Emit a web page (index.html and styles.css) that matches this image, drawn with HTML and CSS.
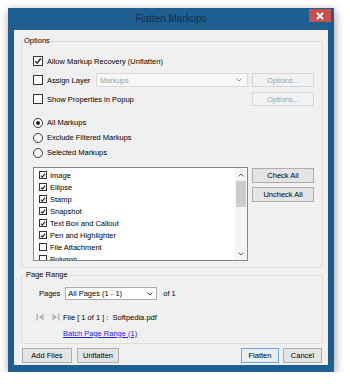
FILE: index.html
```html
<!DOCTYPE html>
<html>
<head>
<link rel="stylesheet" href="styles.css">
</head>
<body>
    <div class="window">
        <div class="titlebar">
            <div class="title">Flatten Markups</div>
            <div class="close">
                <svg width="8" height="8" viewBox="0 0 8 8"><path d="M1 1 L7 7 M7 1 L1 7" stroke="#fff" stroke-width="1.8"/></svg>
            </div>
        </div>
        <div class="client">
            <fieldset class="group">
                <legend>Options</legend>
                <div class="inner options">
                    <div class="row first">
                        <span class="check on"><svg width="8" height="8" viewBox="0 0 8 8"><path d="M1.2 4.2 L3.2 6.2 L6.8 1.5" fill="none" stroke="#222" stroke-width="1.4"/></svg></span>
                        <span>Allow Markup Recovery (Unflatten)</span>
                    </div>
                    <div class="row">
                        <span class="check"></span>
                        <span>Assign Layer</span>
                        <div class="combo disabled">
                            <span>Markups</span>
                            <svg width="6" height="4" viewBox="0 0 6 4"><path d="M0.5 0.5 L3 3 L5.5 0.5" fill="none" stroke="#9a9a9a" stroke-width="1"/></svg>
                        </div>
                        <div class="btn disabled">Options...</div>
                    </div>
                    <div class="row">
                        <span class="check"></span>
                        <span>Show Properties in Popup</span>
                        <div class="btn disabled push">Options...</div>
                    </div>

                    <div class="radios">
                        <div class="row"><span class="radio on"></span><span>All Markups</span></div>
                        <div class="row"><span class="radio"></span><span>Exclude Filtered Markups</span></div>
                        <div class="row"><span class="radio"></span><span>Selected Markups</span></div>
                    </div>

                    <div class="listrow">
                        <div class="list">
                            <div class="items">
                                <div class="item"><span class="check small"><svg width="7" height="7" viewBox="0 0 8 8"><path d="M1.2 4.2 L3.2 6.2 L6.8 1.5" fill="none" stroke="#222" stroke-width="1.5"/></svg></span>Image</div>
                                <div class="item"><span class="check small"><svg width="7" height="7" viewBox="0 0 8 8"><path d="M1.2 4.2 L3.2 6.2 L6.8 1.5" fill="none" stroke="#222" stroke-width="1.5"/></svg></span>Ellipse</div>
                                <div class="item"><span class="check small"><svg width="7" height="7" viewBox="0 0 8 8"><path d="M1.2 4.2 L3.2 6.2 L6.8 1.5" fill="none" stroke="#222" stroke-width="1.5"/></svg></span>Stamp</div>
                                <div class="item"><span class="check small"><svg width="7" height="7" viewBox="0 0 8 8"><path d="M1.2 4.2 L3.2 6.2 L6.8 1.5" fill="none" stroke="#222" stroke-width="1.5"/></svg></span>Snapshot</div>
                                <div class="item"><span class="check small"><svg width="7" height="7" viewBox="0 0 8 8"><path d="M1.2 4.2 L3.2 6.2 L6.8 1.5" fill="none" stroke="#222" stroke-width="1.5"/></svg></span>Text Box and Callout</div>
                                <div class="item"><span class="check small"><svg width="7" height="7" viewBox="0 0 8 8"><path d="M1.2 4.2 L3.2 6.2 L6.8 1.5" fill="none" stroke="#222" stroke-width="1.5"/></svg></span>Pen and Highlighter</div>
                                <div class="item"><span class="check small"></span>File Attachment</div>
                                <div class="item"><span class="check small"></span>Polygon</div>
                            </div>
                            <div class="scroll">
                                <div class="arrow"><svg width="6" height="4" viewBox="0 0 6 4"><path d="M0.5 3.5 L3 1 L5.5 3.5" fill="none" stroke="#606060" stroke-width="1"/></svg></div>
                                <div class="thumb"></div>
                                <div class="arrow down"><svg width="6" height="4" viewBox="0 0 6 4"><path d="M0.5 0.5 L3 3 L5.5 0.5" fill="none" stroke="#606060" stroke-width="1"/></svg></div>
                            </div>
                        </div>
                        <div class="side">
                            <div class="btn tall">Check All</div>
                            <div class="btn tall">Uncheck All</div>
                        </div>
                    </div>
                </div>
            </fieldset>

            <fieldset class="group range">
                <legend>Page Range</legend>
                <div class="inner">
                    <div class="pages">
                        <span>Pages</span>
                        <div class="combo select">
                            <span>All Pages (1 - 1)</span>
                            <svg width="6" height="4" viewBox="0 0 6 4"><path d="M0.5 0.5 L3 3 L5.5 0.5" fill="none" stroke="#444" stroke-width="1"/></svg>
                        </div>
                        <span class="of">of 1</span>
                    </div>
                    <div class="nav">
                        <svg class="navicon" width="8" height="8" viewBox="0 0 8 8"><rect x="0.5" y="0.5" width="1.5" height="7" fill="#b4b4b4"/><path d="M7.5 0.5 L3 4 L7.5 7.5 Z" fill="#b4b4b4"/></svg>
                        <svg class="navicon next" width="8" height="8" viewBox="0 0 8 8"><path d="M0.5 0.5 L5 4 L0.5 7.5 Z" fill="#b4b4b4"/><rect x="6" y="0.5" width="1.5" height="7" fill="#b4b4b4"/></svg>
                        <span class="file">File [ 1 of 1 ] :&nbsp; Softpedia.pdf</span>
                    </div>
                    <div class="linkrow"><a href="#">Batch Page Range (1)</a></div>
                </div>
            </fieldset>

            <div class="actions">
                <div class="btn wide">Add Files</div>
                <div class="btn unflatten">Unflatten</div>
                <div class="btn default">Flatten</div>
                <div class="btn cancel">Cancel</div>
            </div>
        </div>
    </div>
</body>
</html>
```

FILE: styles.css
```css
body {
    margin: 0;
    background-color: #ffffff;
    font-family: "Liberation Sans", Arial, sans-serif;
    font-size: 7.5px;
    color: #000000;
}

.window {
    margin: 8px 0 0 8px;
    width: 326px;
    height: 364px;
    box-sizing: border-box;
    padding: 0 6px 7px 6px;
    background-color: #1f5e91;
    box-shadow: 1px 3px 9px rgba(0, 0, 0, 0.4);
    display: flex;
    flex-direction: column;
}

.titlebar {
    height: 22px;
    flex: none;
    display: grid;
    grid-template-columns: 1fr auto 1fr;
    align-items: start;
}
.title {
    grid-column: 2;
    font-size: 10px;
    line-height: 22px;
    color: #14304c;
}
.close {
    grid-column: 3;
    justify-self: end;
    margin-top: 1px;
    margin-right: -3px;
    width: 22px;
    height: 13px;
    background-color: #c75050;
    display: flex;
    align-items: center;
    justify-content: center;
}

.client {
    flex-grow: 1;
    background-color: #f0f0f0;
    padding: 6px 5px 0 7px;
    display: flex;
    flex-direction: column;
}

.group {
    margin: 0;
    padding: 0;
    min-width: 0;
    border: 1px solid #dcdcdc;
    border-radius: 2px;
}
.group legend {
    margin-left: 1px;
    padding: 0 1px;
    line-height: 10px;
}
.group .inner {
    padding: 0 8px 6px 11px;
}

.row {
    display: flex;
    align-items: center;
    height: 14px;
    margin-top: 5px;
}
.row.first {
    margin-top: 8px;
}

.check {
    width: 10px;
    height: 10px;
    box-sizing: border-box;
    border: 1px solid #333333;
    background-color: #ffffff;
    margin-right: 4px;
    flex: none;
    display: flex;
    align-items: center;
    justify-content: center;
}
.check.small {
    width: 8px;
    height: 8px;
    margin-right: 3px;
}

.radio {
    width: 10px;
    height: 10px;
    box-sizing: border-box;
    border: 1px solid #333333;
    border-radius: 50%;
    background-color: #ffffff;
    margin-right: 4px;
    flex: none;
    display: flex;
    align-items: center;
    justify-content: center;
}
.radio.on::after {
    content: "";
    width: 4px;
    height: 4px;
    border-radius: 50%;
    background-color: #222222;
}

.radios {
    margin-top: 9px;
}
.radios .row {
    height: 15px;
    margin-top: 0;
}

.combo {
    height: 14px;
    box-sizing: border-box;
    display: flex;
    align-items: center;
    justify-content: space-between;
    padding: 0 5px 0 3px;
}
.combo.disabled {
    margin-left: auto;
    margin-right: 4px;
    width: 152px;
    border: 1px solid #d9d9d9;
    background-color: #f7f7f7;
    color: #a0a0a0;
}
.combo.select {
    width: 92px;
    height: 13px;
    border: 1px solid #abadb3;
    background-color: #ffffff;
    padding: 0 3px 0 2px;
}

.btn {
    width: 62px;
    height: 14px;
    box-sizing: border-box;
    border: 1px solid #adadad;
    background-color: #e4e4e4;
    display: flex;
    align-items: center;
    justify-content: center;
    flex: none;
}
.btn.disabled {
    border-color: #d6d6d6;
    background-color: #f2f2f2;
    color: #a2a2a2;
}
.btn.push {
    margin-left: auto;
}
.btn.tall {
    height: 15px;
}

.listrow {
    display: flex;
    align-items: flex-start;
    margin-top: 7px;
}
.list {
    width: 215px;
    height: 94px;
    box-sizing: border-box;
    border: 1px solid #828790;
    background-color: #ffffff;
    display: flex;
    overflow: hidden;
    margin-right: 4px;
}
.items {
    flex-grow: 1;
    padding: 1px 0 0 5px;
}
.item {
    height: 12px;
    display: flex;
    align-items: center;
}
.scroll {
    width: 12px;
    flex: none;
    background-color: #f4f4f4;
    display: flex;
    flex-direction: column;
}
.scroll .arrow {
    height: 13px;
    display: flex;
    align-items: center;
    justify-content: center;
}
.scroll .arrow.down {
    margin-top: auto;
}
.scroll .thumb {
    height: 26px;
    margin: 0 1px;
    background-color: #cdcdcd;
}
.side {
    display: flex;
    flex-direction: column;
    gap: 4px;
    margin-top: 1px;
}

.range {
    margin-top: 2px;
}
.range legend {
    margin-left: 3px;
}
.range .inner {
    padding: 0 8px 4px 14px;
}

.pages {
    display: flex;
    align-items: center;
    margin-top: 7px;
    padding-left: 3px;
}
.pages > span:first-child {
    margin-right: 5px;
}
.pages .of {
    margin-left: 6px;
}

.nav {
    display: flex;
    align-items: center;
    height: 14px;
    margin-top: 10px;
}
.navicon.next {
    margin-left: 8px;
}
.nav .file {
    margin-left: 3px;
}

.linkrow {
    height: 12px;
    margin-top: 3px;
    padding-left: 27px;
    display: flex;
    align-items: center;
}
.linkrow a {
    color: #2323dd;
    text-decoration: underline;
}

.actions {
    display: flex;
    margin-top: 4px;
    padding: 0 1px 0 1px;
}
.actions .btn {
    height: 15px;
}
.btn.wide {
    width: 50px;
}
.btn.unflatten {
    width: 42px;
    margin-left: 5px;
}
.btn.default {
    width: 38px;
    margin-left: auto;
    border-color: #6aa8e6;
    background-color: #e8eef4;
}
.btn.cancel {
    width: 39px;
    margin-left: 4px;
}
```
